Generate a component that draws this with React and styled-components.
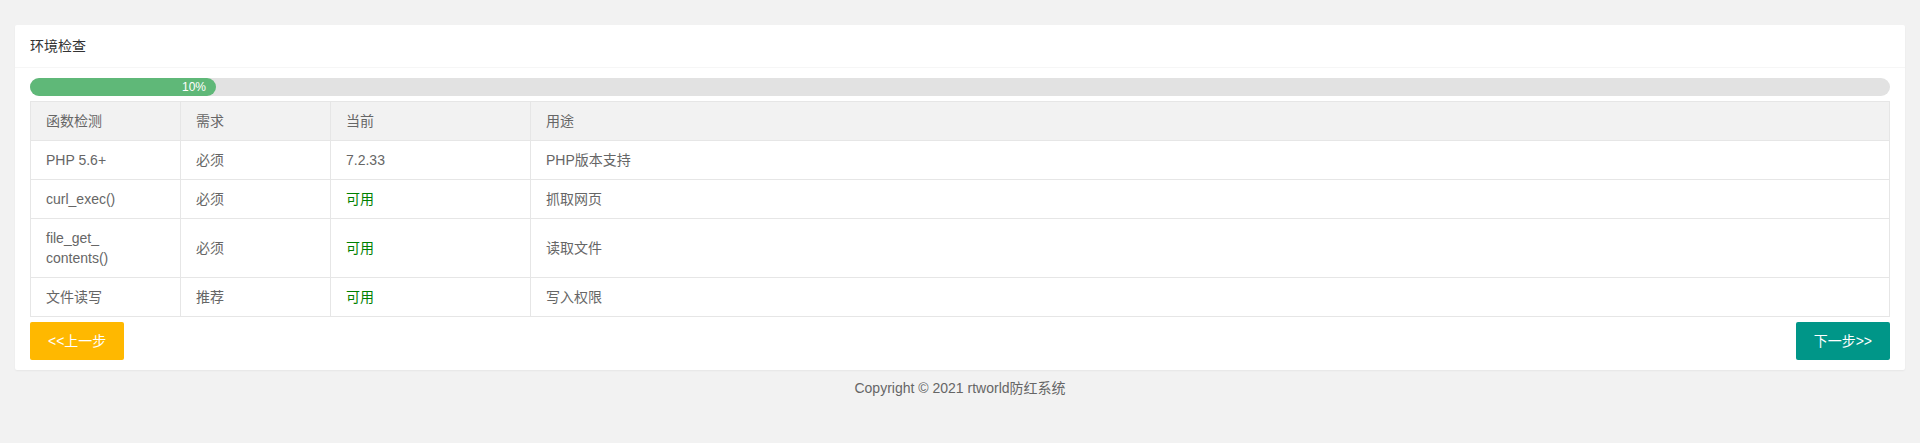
import React from 'react';
import styled, { createGlobalStyle } from 'styled-components';

const GlobalStyle = createGlobalStyle`
  html, body {
    margin: 0;
    padding: 0;
    background: #f2f2f2;
    font-family: "Liberation Sans", Arial, "Noto Sans CJK SC", sans-serif;
    font-size: 14px;
    color: #333;
  }
`;

const Page = styled.div`
  padding: 25px 15px 0;
`;

const Card = styled.div`
  background: #fff;
  border-radius: 2px;
  box-shadow: 0 1px 2px 0 rgba(0, 0, 0, 0.05);
`;

const CardHeader = styled.div`
  height: 42px;
  line-height: 42px;
  padding: 0 15px;
  border-bottom: 1px solid #f6f6f6;
  color: #333;
  font-size: 14px;
`;

const CardBody = styled.div`
  padding: 10px 15px;
`;

const Progress = styled.div`
  position: relative;
  height: 18px;
  border-radius: 20px;
  background: #e2e2e2;
`;

const ProgressBar = styled.div`
  height: 18px;
  line-height: 18px;
  border-radius: 20px;
  background: #5fb878;
  text-align: right;
  box-sizing: border-box;
  padding-right: 10px;
  color: #fff;
  font-size: 12px;
`;

const Table = styled.table`
  width: 100%;
  margin: 5px 0;
  border-collapse: collapse;
  border-spacing: 0;
  table-layout: fixed;
  color: #666;
`;

const Th = styled.th`
  box-sizing: border-box;
  background: #f2f2f2;
  font-weight: 400;
  text-align: left;
  padding: 9px 15px;
  line-height: 20px;
  font-size: 14px;
  border: 1px solid #e6e6e6;
  width: ${(p) => p.$w || 'auto'};
`;

const Td = styled.td`
  padding: 9px 15px;
  line-height: 20px;
  font-size: 14px;
  border: 1px solid #e6e6e6;
  color: ${(p) => (p.$ok ? 'green' : '#666')};
`;

const Actions = styled.div`
  display: flex;
  justify-content: space-between;
`;

const Button = styled.button`
  height: 38px;
  line-height: 38px;
  padding: 0 18px;
  border: none;
  border-radius: 2px;
  background: ${(p) => p.$bg};
  color: #fff;
  font-family: inherit;
  font-size: 14px;
  cursor: pointer;
`;

const Footer = styled.div`
  text-align: center;
  line-height: 36px;
  color: #666;
  font-size: 14px;
`;

const rows = [
  { fn: 'PHP 5.6+', need: '必须', cur: '7.2.33', ok: false, use: 'PHP版本支持' },
  { fn: 'curl_exec()', need: '必须', cur: '可用', ok: true, use: '抓取网页' },
  { fn: <>file_get_<br />contents()</>, need: '必须', cur: '可用', ok: true, use: '读取文件' },
  { fn: '文件读写', need: '推荐', cur: '可用', ok: true, use: '写入权限' },
];

export default function App() {
  const percent = 10;
  return (
    <Page>
      <GlobalStyle />
      <Card>
        <CardHeader>环境检查</CardHeader>
        <CardBody>
          <Progress>
            <ProgressBar style={{ width: `${percent}%` }}>{percent}%</ProgressBar>
          </Progress>
          <Table>
            <thead>
              <tr>
                <Th $w="150px">函数检测</Th>
                <Th $w="150px">需求</Th>
                <Th $w="200px">当前</Th>
                <Th>用途</Th>
              </tr>
            </thead>
            <tbody>
              {rows.map((r, i) => (
                <tr key={i}>
                  <Td>{r.fn}</Td>
                  <Td>{r.need}</Td>
                  <Td $ok={r.ok}>{r.cur}</Td>
                  <Td>{r.use}</Td>
                </tr>
              ))}
            </tbody>
          </Table>
          <Actions>
            <Button $bg="#FFB800">&lt;&lt;上一步</Button>
            <Button $bg="#009688">下一步&gt;&gt;</Button>
          </Actions>
        </CardBody>
      </Card>
      <Footer>Copyright © 2021 rtworld防红系统</Footer>
    </Page>
  );
}
